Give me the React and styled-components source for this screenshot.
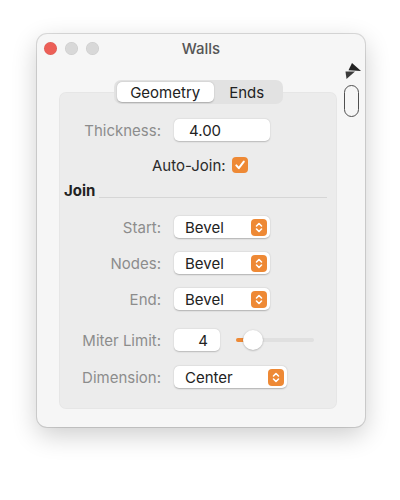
import React from 'react';
import styled, { createGlobalStyle } from 'styled-components';

const Global = createGlobalStyle`
  html, body { margin: 0; padding: 0; background: #ffffff; }
  body {
    font-family: Inter, "Helvetica Neue", "Liberation Sans", sans-serif;
    -webkit-font-smoothing: antialiased;
  }
`;

const Page = styled.div`
  width: 400px;
  height: 500px;
  padding: 34px 0 0 37px;
  box-sizing: border-box;
`;

const Window = styled.div`
  width: 328px;
  height: 393px;
  background: #f6f6f6;
  border-radius: 10px;
  box-shadow: 0 0 0 1px rgba(0, 0, 0, 0.13), 0 8px 26px rgba(0, 0, 0, 0.2);
  display: flex;
  flex-direction: column;
  overflow: hidden;
`;

const TitleBar = styled.div`
  height: 28px;
  display: grid;
  grid-template-columns: 1fr auto 1fr;
  align-items: center;
  padding-left: 7px;
  padding-right: 7px;
`;

const Lights = styled.div`
  display: flex;
  gap: 8px;
`;

const Light = styled.span`
  width: 13px;
  height: 13px;
  border-radius: 50%;
  background: ${p => p.$color};
  box-shadow: inset 0 0 0 0.5px rgba(0, 0, 0, 0.08);
`;

const Title = styled.div`
  font-size: 15px;
  color: #555555;
  font-weight: 500;
`;

const Content = styled.div`
  display: flex;
  align-items: flex-start;
`;

const Main = styled.div`
  margin-left: 22px;
  width: 278px;
  padding-top: 18px;
  display: flex;
  flex-direction: column;
  align-items: center;
`;

const Tabs = styled.div`
  position: relative;
  z-index: 1;
  margin-bottom: -12px;
  height: 24px;
  width: 169px;
  box-sizing: border-box;
  padding: 2px 3px;
  background: #e2e2e2;
  border-radius: 7px;
  display: flex;
`;

const Tab = styled.div`
  height: 20px;
  width: ${p => p.$w}px;
  display: flex;
  align-items: center;
  justify-content: center;
  font-size: 15px;
  color: #222;
  border-radius: 5px;
  background: ${p => (p.$active ? '#ffffff' : 'transparent')};
  box-shadow: ${p => (p.$active ? '0 0.5px 1.5px rgba(0,0,0,0.25)' : 'none')};
`;

const Panel = styled.div`
  width: 100%;
  box-sizing: border-box;
  background: #ececec;
  border-radius: 7px;
  box-shadow: inset 0 0 0 1px rgba(0, 0, 0, 0.025);
  padding-bottom: 21px;
  display: flex;
  flex-direction: column;
`;

const Row = styled.div`
  display: grid;
  grid-template-columns: 102px 1fr;
  column-gap: 13px;
  align-items: center;
  margin-top: ${p => p.$mt}px;
  height: 22px;
`;

const Label = styled.div`
  font-size: 15px;
  color: #8c8c8c;
  text-align: right;
  white-space: nowrap;
`;

const Controls = styled.div`
  display: flex;
  align-items: center;
`;

const Field = styled.div`
  width: ${p => p.$w}px;
  height: 22px;
  box-sizing: border-box;
  background: #fff;
  border-radius: 5px;
  box-shadow: 0 0.5px 1.5px rgba(0, 0, 0, 0.22);
  font-size: 15px;
  color: #222;
  display: flex;
  align-items: center;
  justify-content: ${p => (p.$right ? 'flex-end' : 'flex-start')};
  padding: ${p => (p.$right ? '0 12px 0 0' : '0 0 0 15px')};
`;

const Popup = styled.div`
  width: ${p => p.$w}px;
  height: 22px;
  box-sizing: border-box;
  background: #fff;
  border-radius: 5px;
  box-shadow: 0 0.5px 1.5px rgba(0, 0, 0, 0.25);
  font-size: 15px;
  color: #222;
  display: flex;
  align-items: center;
  justify-content: space-between;
  padding: 0 3px 0 11px;
`;

const Stepper = styled.div`
  width: 16px;
  height: 17px;
  border-radius: 4px;
  background: #ee8935;
  display: flex;
  align-items: center;
  justify-content: center;
`;

const CheckRow = styled.div`
  display: flex;
  align-items: center;
  gap: 6px;
  height: 20px;
  margin-top: ${p => p.$mt}px;
  padding-left: ${p => p.$pl}px;
`;

const CheckLabel = styled.div`
  font-size: 15px;
  color: #2a2a2a;
`;

const Checkbox = styled.div`
  width: 16px;
  height: 16px;
  border-radius: 4px;
  background: #ee8935;
  display: flex;
  align-items: center;
  justify-content: center;
`;

const Heading = styled.div`
  display: flex;
  align-items: center;
  height: 18px;
  margin-top: ${p => p.$mt}px;
  padding-left: 5px;
  padding-right: 10px;
`;

const HeadingText = styled.div`
  font-size: 15px;
  font-weight: 700;
  color: #222;
`;

const Rule = styled.div`
  flex: 1;
  height: 1px;
  background: #d6d6d6;
  margin-left: 4px;
  align-self: flex-end;
  margin-bottom: 1px;
`;

const Slider = styled.div`
  position: relative;
  margin-left: 16px;
  width: 78px;
  height: 4px;
  border-radius: 2px;
  background: #e0e0e0;
`;

const SliderFill = styled.div`
  width: ${p => p.$w}px;
  height: 4px;
  border-radius: 2px;
  background: #ee8935;
`;

const Knob = styled.div`
  position: absolute;
  top: -8px;
  left: ${p => p.$left}px;
  width: 20px;
  height: 20px;
  border-radius: 50%;
  background: #fff;
  box-shadow: 0 0.5px 2px rgba(0, 0, 0, 0.3);
`;

const Rail = styled.div`
  margin-left: 7px;
  display: flex;
  flex-direction: column;
  align-items: flex-start;
`;

const Pill = styled.div`
  margin-top: 5px;
  width: 15px;
  height: 32px;
  box-sizing: border-box;
  border: 1.5px solid #505050;
  border-radius: 8px;
`;

const Chevrons = () => (
  <svg width="10" height="13" viewBox="0 0 10 13">
    <path d="M2.5 5 L5 2.5 L7.5 5 M2.5 8 L5 10.5 L7.5 8" fill="none" stroke="#fff" strokeWidth="1.6" strokeLinecap="round" strokeLinejoin="round" />
  </svg>
);

const Check = () => (
  <svg width="12" height="12" viewBox="0 0 12 12">
    <path d="M2.3 6.4 L4.8 9.2 L9.8 2.6" fill="none" stroke="#fff" strokeWidth="2" strokeLinecap="round" strokeLinejoin="round" />
  </svg>
);

const SplitIcon = () => (
  <svg width="18" height="18" viewBox="0 0 18 18">
    <polygon points="8,1 17,9 4.5,8.2" fill="#222" />
    <polygon points="1.5,9.6 11,9.6 2.5,17" fill="#3a3a3a" />
  </svg>
);

const PopupField = ({ w, value }) => (
  <Popup $w={w}>
    <span>{value}</span>
    <Stepper><Chevrons /></Stepper>
  </Popup>
);

export default function App() {
  return (
    <>
      <Global />
      <Page>
        <Window>
          <TitleBar>
            <Lights>
              <Light $color="#ec5f57" />
              <Light $color="#d8d8d8" />
              <Light $color="#d8d8d8" />
            </Lights>
            <Title>Walls</Title>
            <span />
          </TitleBar>
          <Content>
            <Main>
              <Tabs>
                <Tab $w={98} $active>Geometry</Tab>
                <Tab $w={66}>Ends</Tab>
              </Tabs>
              <Panel>
                <Row $mt={27}>
                  <Label>Thickness:</Label>
                  <Controls><Field $w={96}>4.00</Field></Controls>
                </Row>
                <CheckRow $mt={14} $pl={93}>
                  <CheckLabel>Auto-Join:</CheckLabel>
                  <Checkbox><Check /></Checkbox>
                </CheckRow>
                <Heading $mt={6}>
                  <HeadingText>Join</HeadingText>
                  <Rule />
                </Heading>
                <Row $mt={17}>
                  <Label>Start:</Label>
                  <Controls><PopupField w={96} value="Bevel" /></Controls>
                </Row>
                <Row $mt={14}>
                  <Label>Nodes:</Label>
                  <Controls><PopupField w={96} value="Bevel" /></Controls>
                </Row>
                <Row $mt={14}>
                  <Label>End:</Label>
                  <Controls><PopupField w={96} value="Bevel" /></Controls>
                </Row>
                <Row $mt={19}>
                  <Label>Miter Limit:</Label>
                  <Controls>
                    <Field $w={46} $right>4</Field>
                    <Slider>
                      <SliderFill $w={9} />
                      <Knob $left={7} />
                    </Slider>
                  </Controls>
                </Row>
                <Row $mt={15}>
                  <Label>Dimension:</Label>
                  <Controls><PopupField w={113} value="Center" /></Controls>
                </Row>
              </Panel>
            </Main>
            <Rail>
              <SplitIcon />
              <Pill />
            </Rail>
          </Content>
        </Window>
      </Page>
    </>
  );
}
